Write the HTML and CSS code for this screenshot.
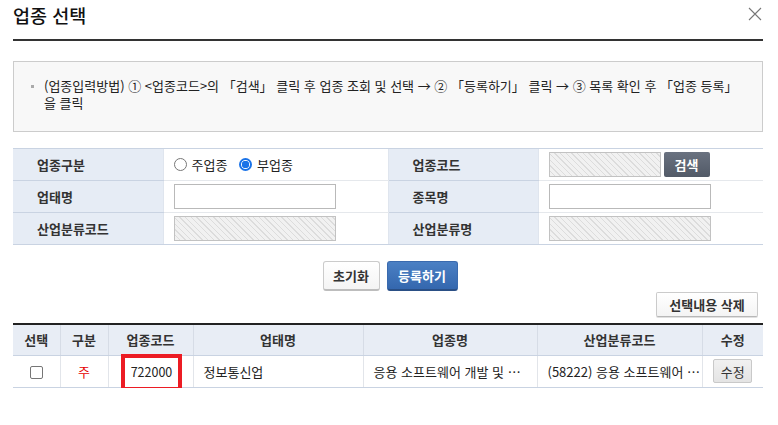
FILE: index.html
```html
<!DOCTYPE html>
<html lang="ko">
<head>
<meta charset="utf-8">
<title>업종 선택</title>
<link rel="stylesheet" href="styles.css">
</head>
<body>
<div class="dialog">
  <div class="head">
    <h1 class="title">업종 선택</h1>
    <span class="close" aria-label="닫기">
      <svg width="14" height="14" viewBox="0 0 14 14"><path d="M1 1L13 13M13 1L1 13" stroke="#777" stroke-width="1.1" fill="none"/></svg>
    </span>
  </div>

  <div class="info">
    <p><span class="bullet"></span>(업종입력방법) ① &lt;업종코드&gt;의 「검색」 클릭 후 업종 조회 및 선택 → ② 「등록하기」 클릭 → ③ 목록 확인 후 「업종 등록」 을 클릭</p>
  </div>

  <table class="form">
    <colgroup><col class="c150"><col><col class="c150"><col></colgroup>
    <tr>
      <th>업종구분</th>
      <td>
        <label class="radio"><span class="rdo"></span>주업종</label>
        <label class="radio"><span class="rdo on"></span>부업종</label>
      </td>
      <th>업종코드</th>
      <td><span class="inp hatch w112"></span><button class="btn-search">검색</button></td>
    </tr>
    <tr>
      <th>업태명</th>
      <td><span class="inp w162"></span></td>
      <th>종목명</th>
      <td><span class="inp w162"></span></td>
    </tr>
    <tr>
      <th>산업분류코드</th>
      <td><span class="inp hatch w162"></span></td>
      <th>산업분류명</th>
      <td><span class="inp hatch w162"></span></td>
    </tr>
  </table>

  <div class="actions">
    <button class="btn btn-white">초기화</button>
    <button class="btn btn-blue">등록하기</button>
  </div>
  <div class="actions-right">
    <button class="btn btn-white btn-del">선택내용 삭제</button>
  </div>

  <table class="list">
    <colgroup>
      <col style="width:47px"><col style="width:48px"><col style="width:85px"><col style="width:170px"><col style="width:174px"><col style="width:165px"><col style="width:61px">
    </colgroup>
    <thead>
      <tr><th>선택</th><th>구분</th><th>업종코드</th><th>업태명</th><th>업종명</th><th>산업분류코드</th><th>수정</th></tr>
    </thead>
    <tbody>
      <tr>
        <td class="ctr"><span class="chk"></span></td>
        <td class="ctr red">주</td>
        <td class="ctr code"><span class="hl">722000</span></td>
        <td>정보통신업</td>
        <td>응용 소프트웨어 개발 및 …</td>
        <td>(58222) 응용 소프트웨어 …</td>
        <td class="ctr"><button class="btn-edit">수정</button></td>
      </tr>
    </tbody>
  </table>
</div>
</body>
</html>
```

FILE: styles.css
```css
*, *::before, *::after { box-sizing: border-box; }
html, body { margin: 0; padding: 0; background: #fff; }
body {
  font-family: "Noto Sans CJK KR", "Noto Sans", "Liberation Sans", sans-serif;
  font-size: 13px;
  color: #333;
}
.dialog { padding: 0 15px 0 13px; }

.head {
  display: flex;
  justify-content: space-between;
  align-items: flex-start;
  height: 41px;
  border-bottom: 2px solid #333;
}
.title {
  margin: 3px 0 0 0;
  font-size: 18.5px;
  font-weight: 500;
  color: #111;
  line-height: 24px;
}
.close { margin-top: 7px; margin-right: 1px; display: block; height: 14px; }
.close svg { display: block; }

.info {
  margin-top: 20px;
  height: 71px;
  background: #f8f8f8;
  border: 1px solid #cccccc;
  padding: 15px 18px 0 30px;
}
.info p {
  margin: 0;
  line-height: 17px;
  color: #222;
  font-size: 13px;
  word-break: keep-all;
  text-indent: -13px;
}
.bullet {
  display: inline-block;
  width: 3px; height: 3px;
  background: #aaa;
  vertical-align: middle;
  margin: 0 10px 2px 0;
}

.form {
  margin-top: 16px;
  width: 750px;
  border-collapse: collapse;
  table-layout: fixed;
}
.form .c150 { width: 150px; }
.form th, .form td {
  height: 32px;
  padding: 0;
  border-top: 1px solid #c9d3e2;
  border-bottom: 1px solid #c9d3e2;
}
.form th {
  background: #e6ecf5;
  text-align: left;
  padding-left: 24px;
  font-weight: 700;
  color: #333;
}
.form td {
  padding-left: 10px;
  border-left: 1px solid #dfe5ee;
  border-top-color: #e5e8ec;
  border-bottom-color: #e5e8ec;
  background: #fff;
}
.form tr:first-child td { border-top-color: #c9d3e2; }
.form tr:last-child td { border-bottom-color: #c9d3e2; }
.form td + th { border-left: 1px solid #dfe5ee; }

.radio { display: inline-flex; align-items: center; margin-right: 8px; color: #222; }
.rdo {
  width: 13px; height: 13px;
  border: 1px solid #777;
  border-radius: 50%;
  margin-right: 5px;
  background: #fff;
}
.rdo.on {
  border: 2px solid #1a73e8;
  background: radial-gradient(circle, #1a73e8 0 3.5px, #fff 4px);
}

.inp {
  display: inline-block;
  vertical-align: middle;
  height: 25px;
  border: 1px solid #b9b9b9;
  background: #fff;
}
.w112 { width: 112px; }
.w162 { width: 162px; }
.hatch {
  background: repeating-linear-gradient(45deg, #f1f1f1 0 3px, #dcdcdc 3px 4px);
  border-color: #c2c2c2;
}
.btn-search {
  vertical-align: middle;
  margin-left: 3px;
  width: 46px; height: 25px;
  border: 0;
  border-radius: 2px;
  background: linear-gradient(#6a7280, #525a67);
  color: #fff;
  font-family: inherit;
  font-weight: 700;
  font-size: 13px;
  padding: 0;
}

.actions {
  display: flex;
  justify-content: center;
  gap: 7px;
  margin-top: 16px;
  padding-left: 4px;
}
.btn {
  font-family: inherit;
  font-size: 13px;
  font-weight: 700;
  border-radius: 3px;
  padding: 0 9px;
  height: 30px;
  cursor: pointer;
}
.btn-white {
  background: linear-gradient(#fff, #f4f4f4);
  border: 1px solid #cbcbcb;
  border-bottom: 2px solid #bdbdbd;
  color: #333;
  width: 57px;
  padding: 0;
}
.btn-blue {
  background: linear-gradient(#4b80c4, #3467ae);
  border: 1px solid #3a6aae;
  border-bottom: 2px solid #2a4f85;
  color: #fff;
  width: 71px;
  padding: 0;
}
.actions-right {
  display: flex;
  justify-content: flex-end;
  margin-top: 1px;
  padding-right: 5px;
}
.btn-del {
  width: 102px;
  height: 25px;
  border-radius: 2px;
  border: 1px solid #cbcbcb;
  border-bottom: 1px solid #b8b8b8;
  box-shadow: 0 1px 0 #e0e0e0;
}

.list {
  margin-top: 6px;
  width: 750px;
  border-collapse: collapse;
  table-layout: fixed;
  border-top: 2px solid #222;
}
.list th {
  background: #e8edf5;
  height: 31px;
  font-weight: 700;
  color: #333;
  border-left: 1px solid #d6dce6;
  border-bottom: 1px solid #c9d3e2;
  padding: 0;
}
.list td {
  height: 32px;
  border-left: 1px solid #e2e5ea;
  border-bottom: 1px solid #c9d3e2;
  padding: 0 10px;
  color: #222;
  white-space: nowrap;
  overflow: hidden;
}
.list th:first-child, .list td:first-child { border-left: 0; }
.ctr { text-align: center; }
.list td.ctr { padding: 0; }
.list td.red { color: #e60000; }
.chk {
  display: inline-block;
  vertical-align: middle;
  width: 13px; height: 13px;
  border: 1px solid #767676;
  border-radius: 2px;
  background: #fff;
}
.list td.code { position: relative; overflow: visible; }
.hl {
  display: inline-block;
  font-size: 12.5px;
  padding-left: 2px;
}
.code::after {
  content: "";
  position: absolute;
  left: 12px; top: -2px;
  width: 61px; height: 37px;
  border: 4px solid #ec1c24;
}
.btn-edit {
  width: 39px; height: 24px;
  border: 1px solid #c9c9c9;
  border-radius: 2px;
  background: linear-gradient(#f1f1f1, #e4e4e4);
  font-family: inherit;
  font-size: 13px;
  color: #333;
  padding: 0;
  vertical-align: middle;
}
```
